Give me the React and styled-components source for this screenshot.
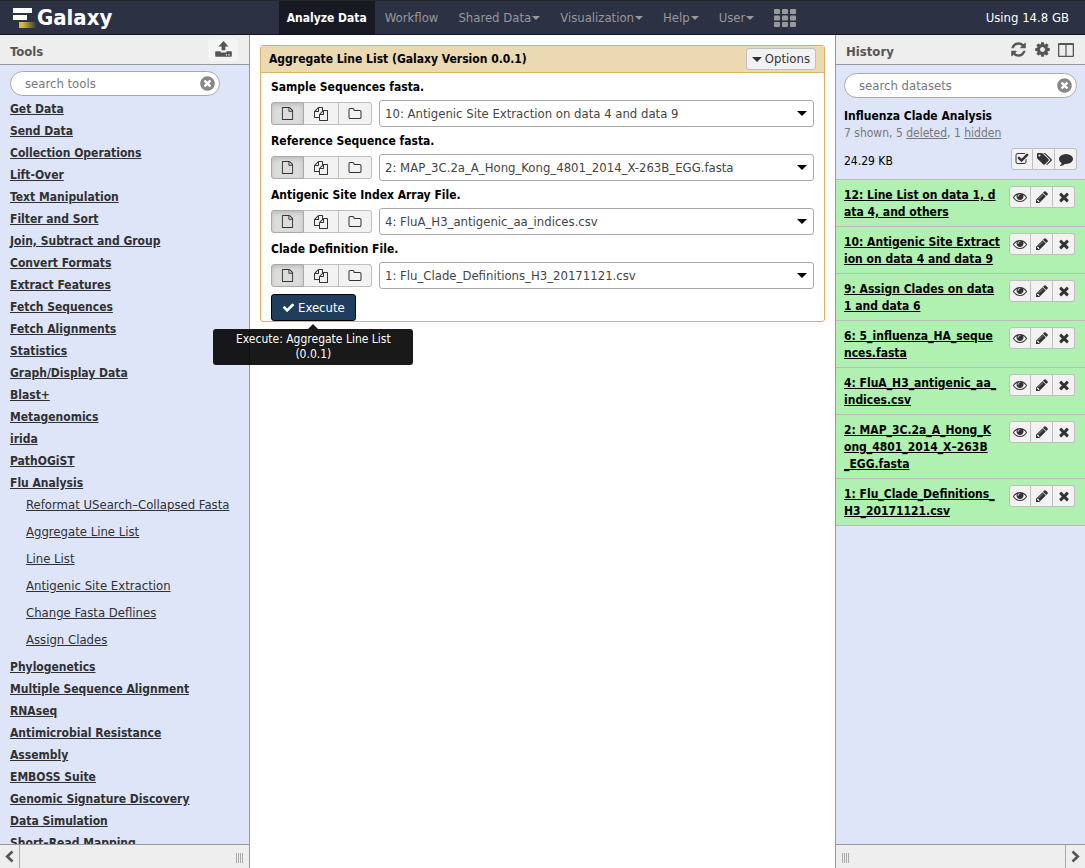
import React from "react";
import styled, { createGlobalStyle, css } from "styled-components";

const GlobalStyle = createGlobalStyle`
  *, *::before, *::after { box-sizing: border-box; }
  body {
    margin: 0;
    background: #fff;
    color: #000;
    font: 13px/18px "DejaVu Sans Condensed", "Lucida Grande", "Noto Sans", sans-serif;
  }
  button, input, select { font: inherit; margin: 0; }
  ul { list-style: none; margin: 0; padding: 0; }
`;

/* ---------- icons ---------- */

const ICONS = {
  file: "M1596 380q28 28 48 76t20 88v1152q0 40-28 68t-68 28h-1344q-40 0-68-28t-28-68v-1600q0-40 28-68t68-28h896q40 0 88 20t76 48zm-444-244v376h376q-10-29-22-41l-313-313q-12-12-41-22zm384 1528v-1024h-416q-40 0-68-28t-28-68v-416h-768v1536h1280z",
  files: "M1696 384q40 0 68 28t28 68v1216q0 40-28 68t-68 28h-960q-40 0-68-28t-28-68v-288h-544q-40 0-68-28t-28-68v-672q0-40 20-88t48-76l408-408q28-28 76-48t88-20h416q40 0 68 28t28 68v328q68-40 128-40h416zm-544 213l-299 299h299v-299zm-640-384l-299 299h299v-299zm196 647l316-316v-416h-384v416q0 40-28 68t-68 28h-416v640h512v-256q0-40 20-88t48-76zm956 804v-1152h-384v416q0 40-28 68t-68 28h-416v640h896z",
  folder: "M1600 1312v-704q0-40-28-68t-68-28h-704q-40 0-68-28t-28-68v-64q0-40-28-68t-68-28h-320q-40 0-68 28t-28 68v960q0 40 28 68t68 28h1216q40 0 68-28t28-68zm128-704v704q0 92-66 158t-158 66h-1216q-92 0-158-66t-66-158v-960q0-92 66-158t158-66h320q92 0 158 66t66 158v32h672q92 0 158 66t66 158z",
  times: "M1490 1322q0 40-28 68l-136 136q-28 28-68 28t-68-28l-294-294-294 294q-28 28-68 28t-68-28l-136-136q-28-28-28-68t28-68l294-294-294-294q-28-28-28-68t28-68l136-136q28-28 68-28t68 28l294 294 294-294q28-28 68-28t68 28l136 136q28 28 28 68t-28 68l-294 294 294 294q28 28 28 68z",
  timesCircle: "M1277 1122q0-26-19-45l-181-181 181-181q19-19 19-45 0-27-19-46l-90-90q-19-19-46-19-26 0-45 19l-181 181-181-181q-19-19-45-19-27 0-46 19l-90 90q-19 19-19 46 0 26 19 45l181 181-181 181q-19 19-19 45 0 27 19 46l90 90q19 19 46 19 26 0 45-19l181-181 181 181q19 19 45 19 27 0 46-19l90-90q19-19 19-46zm387-226q0 209-103 385.5t-279.5 279.5-385.5 103-385.5-103-279.5-279.5-103-385.5 103-385.5 279.5-279.5 385.5-103 385.5 103 279.5 279.5 103 385.5z",
  eye: "M1664 960q-152-236-381-353 61 104 61 225 0 185-131.5 316.5t-316.5 131.5-316.5-131.5-131.5-316.5q0-121 61-225-229 117-381 353 133 205 333.5 326.5t434.5 121.5 434.5-121.5 333.5-326.5zm-720-384q0-20-14-34t-34-14q-125 0-214.5 89.5t-89.5 214.5q0 20 14 34t34 14 34-14 14-34q0-86 61-147t147-61q20 0 34-14t14-34zm848 384q0 34-20 69-140 230-376.5 368.5t-499.5 138.5-499.5-139-376.5-368q-20-35-20-69t20-69q140-229 376.5-368t499.5-139 499.5 139 376.5 368q20 35 20 69z",
  pencil: "M491 1536l91-91-235-235-91 91v107h128v128h107zm523-928q0-22-22-22-10 0-17 7l-542 542q-7 7-7 17 0 22 22 22 10 0 17-7l542-542q7-7 7-17zm-54-192l416 416-832 832h-416v-416zm683 96q0 53-37 90l-166 166-416-416 166-165q36-38 90-38 53 0 91 38l235 234q37 39 37 91z",
  check: "M1671 566q0 40-28 68l-724 724-136 136q-28 28-68 28t-68-28l-136-136-362-362q-28-28-28-68t28-68l136-136q28-28 68-28t68 28l294 295 656-657q28-28 68-28t68 28l136 136q28 28 28 68z",
  checkSquare: "M1472 930v318q0 119-84.5 203.5t-203.5 84.5h-832q-119 0-203.5-84.5t-84.5-203.5v-832q0-119 84.5-203.5t203.5-84.5h832q63 0 117 25 15 7 18 23 3 17-9 29l-49 49q-10 10-23 10-3 0-9-2-23-6-45-6h-832q-66 0-113 47t-47 113v832q0 66 47 113t113 47h832q66 0 113-47t47-113v-254q0-13 9-22l64-64q10-10 23-10 6 0 12 3 20 8 20 29zm231-489l-814 814q-24 24-57 24t-57-24l-430-430q-24-24-24-57t24-57l110-110q24-24 57-24t57 24l263 263 647-647q24-24 57-24t57 24l110 110q24 24 24 57t-24 57z",
  tags: "M576 448q0-53-37.5-90.5t-90.5-37.5-90.5 37.5-37.5 90.5 37.5 90.5 90.5 37.5 90.5-37.5 37.5-90.5zm1067 576q0 53-37 90l-491 492q-39 37-91 37-53 0-90-37l-715-716q-38-37-64.5-101t-26.5-117v-416q0-52 38-90t90-38h416q53 0 117 26.5t102 64.5l715 714q37 39 37 91zm384 0q0 53-37 90l-491 492q-39 37-91 37-36 0-59-14t-53-45l470-470q37-37 37-90 0-52-37-91l-715-714q-38-38-102-64.5t-117-26.5h224q53 0 117 26.5t102 64.5l715 714q37 39 37 91z",
  comment: "M1792 896q0 174-120 321.5t-326 233-450 85.5q-70 0-145-8-198 175-460 242-49 14-114 22-17 2-30.5-9t-17.5-29v-1q-3-4-.5-12t2-10 4.5-9.5l6-9 7-8.5 8-9q7-8 31-34.5t34.5-38 31-39.5 32.5-51 27-59 26-76q-157-89-247.5-220t-90.5-281q0-130 71-248.5t191-204.5 286-136.5 348-50.5q244 0 450 85.5t326 233 120 321.5z",
  refresh: "M1639 1056q0 5-1 7-64 268-268 434.5t-478 166.5q-146 0-282.5-55t-243.5-157l-129 129q-19 19-45 19t-45-19-19-45v-448q0-26 19-45t45-19h448q26 0 45 19t19 45-19 45l-137 137q71 66 161 102t187 36q134 0 250-65t186-179q11-17 53-117 8-23 30-23h192q13 0 22.5 9.5t9.5 22.5zm25-800v448q0 26-19 45t-45 19h-448q-26 0-45-19t-19-45 19-45l138-138q-148-137-349-137-134 0-250 65t-186 179q-11 17-53 117-8 23-30 23h-199q-13 0-22.5-9.5t-9.5-22.5v-7q65-268 270-434.5t480-166.5q146 0 284 55.5t245 156.5l130-129q19-19 45-19t45 19 19 45z",
  cog: "M1152 896q0-106-75-181t-181-75-181 75-75 181 75 181 181 75 181-75 75-181zm512-109v222q0 12-8 23t-20 13l-185 28q-19 54-39 91 35 50 107 138 10 12 10 25t-9 23q-27 37-99 108t-94 71q-12 0-26-9l-138-108q-44 23-91 38-16 136-29 186-7 28-36 28h-222q-14 0-24.5-8.5t-11.5-21.5l-28-184q-49-16-90-37l-141 107q-10 9-25 9-14 0-25-11-126-114-165-168-7-10-7-23 0-12 8-23 15-21 51-66.5t54-70.5q-27-50-41-99l-183-27q-13-2-21-12.5t-8-23.5v-222q0-12 8-23t19-13l186-28q14-46 39-92-40-57-107-138-10-12-10-24 0-10 9-23 26-36 98.5-107.5t94.5-71.5q13 0 26 10l138 107q44-23 91-38 16-136 29-186 7-28 36-28h222q14 0 24.5 8.5t11.5 21.5l28 184q49 16 90 37l142-107q9-9 24-9 13 0 25 10 129 119 165 170 7 8 7 22 0 12-8 23-15 21-51 66.5t-54 70.5q26 50 41 98l183 28q13 2 21 12.5t8 23.5z",
};

const Glyph = styled.svg`
  display: block;
  flex: none;
  fill: currentColor;
`;

function Icon({ name, size = 14, wide = 1792 }) {
  return (
    <Glyph width={Math.round((size * wide) / 1792)} height={size} viewBox={`0 0 ${wide} 1792`} aria-hidden="true">
      <path d={ICONS[name]} />
    </Glyph>
  );
}

const UploadIcon = () => (
  <Glyph width="17" height="17" viewBox="0 0 17 17" aria-hidden="true">
    <path d="M8.500 0L13.500 5.600H10.400V9.300H6.600V5.600H3.500Z" />
    <path fillRule="evenodd" d="M1 10.200H5.600V11.500H11.400V10.200H16Q16.800 10.200 16.800 11V15Q16.800 15.800 16 15.800H1Q.2 15.800 .2 15V11Q.2 10.200 1 10.200ZM10.800 13.200V14.400H12V13.200ZM13.200 13.200V14.400H14.600V13.200Z" />
  </Glyph>
);

const ColumnsIcon = () => (
  <Glyph width="16" height="16" viewBox="0 0 16 16" aria-hidden="true">
    <path fillRule="evenodd" d="M1 1H15Q16 1 16 2V14Q16 15 15 15H1Q0 15 0 14V2Q0 1 1 1ZM1.300 3V13.700H7.400V3ZM8.600 3V13.700H14.700V3Z" />
  </Glyph>
);

const ChevronIcon = ({ right }) => (
  <Glyph width="9" height="13" viewBox="0 0 9 13" aria-hidden="true">
    <path
      d={right ? "M1.500 1.500L6.800 6.500L1.500 11.500" : "M7.500 1.500L2.200 6.500L7.500 11.500"}
      fill="none"
      stroke="currentColor"
      strokeWidth="2.600"
    />
  </Glyph>
);

const GridIcon = () => (
  <Glyph width="22" height="18" viewBox="0 0 22 18" aria-hidden="true">
    {[0, 1, 2].map((r) =>
      [0, 1, 2].map((c) => <rect key={`${r}${c}`} x={c * 8} y={r * 6.500} width="6" height="5" rx="1" />)
    )}
  </Glyph>
);

const LogoMark = () => (
  <Glyph width="25" height="22" viewBox="0 0 25 22" aria-hidden="true">
    <defs>
      <linearGradient id="gold">
        <stop offset="0.2" stopColor="#d6bb35" />
        <stop offset="1" stopColor="#d6bb35" stopOpacity="0" />
      </linearGradient>
    </defs>
    <rect x="1" y="1" width="19" height="5" fill="#fff" />
    <rect x="1" y="8" width="14" height="5" fill="#fff" />
    <rect x="7" y="15" width="18" height="6" fill="url(#gold)" />
  </Glyph>
);

const Caret = styled.span`
  display: block;
  flex: none;
  border: 4px solid transparent;
  border-top-color: currentColor;
  border-bottom: 0;
`;

/* ---------- page frame ---------- */

const Page = styled.div`
  display: flex;
  flex-direction: column;
  height: 100vh;
`;

const Masthead = styled.header`
  display: grid;
  grid-template-columns: 1fr auto 1fr;
  align-items: stretch;
  flex: none;
  height: 35px;
  border-top: 1px solid #262626;
  border-bottom: 1px solid #14161f;
  background: #2c3143;
`;

const Brand = styled.a`
  display: flex;
  align-items: center;
  padding-left: 12px;
  color: #fff;
  font-size: 22px;
  font-weight: bold;
  text-decoration: none;
`;

const Nav = styled.nav`
  display: flex;
`;

const NavLink = styled.a`
  display: flex;
  align-items: center;
  gap: 1px;
  padding: ${(p) => (p.$active ? "0 8px" : "0 10px")};
  color: ${(p) => (p.$active ? "#fff" : "#999")};
  background: ${(p) => (p.$active ? "#181a23" : "none")};
  font-size: ${(p) => (p.$active ? "12px" : "13px")};
  font-weight: ${(p) => (p.$active ? "bold" : "normal")};
  text-decoration: none;
`;

const Quota = styled.div`
  align-self: center;
  justify-self: end;
  padding-right: 16px;
  color: #fff;
  font-size: 13px;
`;

const Columns = styled.div`
  display: flex;
  flex: 1;
  min-height: 0;
`;

const Panel = styled.aside`
  display: flex;
  flex-direction: column;
  flex: none;
  width: 250px;
  background: #dfe5f9;
  border: 0 solid #999;
  border-width: ${(p) => (p.$side === "left" ? "0 1px 0 0" : "0 0 0 1px")};
`;

const PanelHeader = styled.div`
  display: flex;
  align-items: center;
  justify-content: space-between;
  flex: none;
  height: 30px;
  padding: 0 11px 0 10px;
  border-bottom: 1px solid #999;
  background: #eee;
  color: #555;
`;

const PanelTitle = styled.h2`
  margin: 0;
  padding-top: 4px;
  font-size: 13px;
  font-weight: bold;
`;

const HeaderTools = styled.div`
  display: flex;
  align-items: center;
  gap: 7px;
`;

const BareButton = styled.button`
  display: flex;
  align-items: center;
  justify-content: center;
  padding: 0;
  border: 0;
  background: none;
  color: inherit;
`;

const UploadButton = styled(BareButton)`
  width: 30px;
  height: 22px;
  border-radius: 3px;
  background: #f4f4f4;
`;

const PanelBody = styled.div`
  flex: 1;
  min-height: 0;
  overflow: hidden;
`;

const PanelFooter = styled.div`
  display: flex;
  align-items: stretch;
  justify-content: space-between;
  flex-direction: ${(p) => (p.$side === "left" ? "row" : "row-reverse")};
  flex: none;
  height: 24px;
  border-top: 1px solid #999;
  background: #eee;
  color: #555;
`;

const Collapse = styled(BareButton)`
  width: 20px;
  border: 0 solid #aaa;
  border-width: ${(p) => (p.$side === "left" ? "0 1px 0 0" : "0 0 0 1px")};
`;

const Grip = styled.div`
  align-self: center;
  width: 7px;
  height: 10px;
  margin: 3px 6px 0;
  background: repeating-linear-gradient(to right, #aaa 0 1px, transparent 1px 2px);
`;

/* ---------- search ---------- */

const SearchBox = styled.form`
  display: flex;
  align-items: center;
  height: 25px;
  padding: 0 3px 0 14px;
  border: 1px solid #aaa;
  border-radius: 13px;
  background: #fff;
  color: #888;
`;

const SearchInput = styled.input`
  flex: 1;
  min-width: 0;
  padding: 0;
  border: 0;
  outline: 0;
  background: none;
  font-size: 13px;
  line-height: 18px;
  &::placeholder { color: #777; opacity: 1; }
`;

function Search({ label }) {
  return (
    <SearchBox onSubmit={(e) => e.preventDefault()}>
      <SearchInput placeholder={label} aria-label={label} />
      <BareButton type="button" aria-label="Clear search">
        <Icon name="timesCircle" size={17} />
      </BareButton>
    </SearchBox>
  );
}

/* ---------- tool list ---------- */

const ToolSearch = styled.div`
  padding: 6px 29px 2px 10px;
`;

const ToolLink = styled.a`
  display: block;
  padding-left: 10px;
  color: #303030;
  white-space: nowrap;
  ${(p) =>
    p.$tool
      ? css`
          padding-left: 26px;
          padding-bottom: 6px;
          font-size: 13px;
          line-height: 21px;
        `
      : css`
          font-size: 12px;
          font-weight: bold;
          line-height: 22px;
        `}
`;

const SECTIONS = [
  "Get Data", "Send Data", "Collection Operations", "Lift-Over", "Text Manipulation", "Filter and Sort",
  "Join, Subtract and Group", "Convert Formats", "Extract Features", "Fetch Sequences", "Fetch Alignments",
  "Statistics", "Graph/Display Data", "Blast+", "Metagenomics", "irida", "PathOGiST", "Flu Analysis",
  "Phylogenetics", "Multiple Sequence Alignment", "RNAseq", "Antimicrobial Resistance", "Assembly",
  "EMBOSS Suite", "Genomic Signature Discovery", "Data Simulation", "Short–Read Mapping",
];

const FLU_TOOLS = [
  "Reformat USearch–Collapsed Fasta", "Aggregate Line List", "Line List",
  "Antigenic Site Extraction", "Change Fasta Deflines", "Assign Clades",
];

/* ---------- tool form ---------- */

const Main = styled.main`
  flex: 1;
  min-width: 0;
  padding: 10px;
`;

const Card = styled.form`
  border: 1px solid #d8b365;
  border-radius: 3px;
`;

const CardHeader = styled.div`
  display: flex;
  align-items: center;
  justify-content: space-between;
  height: 27px;
  padding: 0 8px;
  border-bottom: 1px solid #d8b365;
  background: #ebd9b2;
`;

const CardTitle = styled.h1`
  margin: 0;
  font-size: 12px;
  font-weight: bold;
`;

const OptionsButton = styled.button`
  display: flex;
  align-items: center;
  gap: 3px;
  height: 22px;
  padding: 0 5px;
  border: 1px solid #bfbfbf;
  border-radius: 3px;
  background: #f2f2f2;
  color: #333;
`;

const CardBody = styled.div`
  padding: 3px 10px 0;
`;

const Field = styled.div`
  padding-bottom: 3px;
`;

const FieldLabel = styled.label`
  display: block;
  padding-bottom: 2px;
  font-size: 12px;
  font-weight: bold;
  line-height: 22px;
`;

const FieldRow = styled.div`
  display: flex;
  align-items: center;
  gap: 7px;
`;

const ButtonGroup = styled.div`
  display: flex;
  flex: none;
`;

const GroupButton = styled.button`
  display: flex;
  align-items: center;
  justify-content: center;
  width: ${(p) => p.$width}px;
  height: ${(p) => p.$height}px;
  padding: 0;
  border: 1px solid #bfbfbf;
  background: #f2f2f2;
  color: #333;
  & + & { border-left: 0; }
  &:first-child { border-radius: 3px 0 0 3px; }
  &:last-child { border-radius: 0 3px 3px 0; }
  ${(p) =>
    p.$pressed &&
    css`
      border-color: #aaa;
      background: #dcdcdc;
      box-shadow: inset 0 2px 4px rgba(0, 0, 0, 0.15);
    `}
`;

const SelectWrap = styled.div`
  display: flex;
  align-items: center;
  flex: 1;
  min-width: 0;
  height: 27px;
  padding-right: 6px;
  border: 1px solid #aaa;
  border-radius: 3px;
`;

const Select = styled.select`
  flex: 1;
  min-width: 0;
  height: 25px;
  padding: 0 5px;
  border: 0;
  background: none;
  color: #444;
  appearance: none;
`;

const BigCaret = styled(Caret)`
  border-width: 5px 5px 0;
`;

const Submit = styled.div`
  position: relative;
  width: max-content;
  padding-top: 2px;
`;

const ExecuteButton = styled.button`
  display: flex;
  align-items: center;
  gap: 3px;
  height: 27px;
  padding: 0 10px;
  border: 1px solid #000;
  border-radius: 3px;
  background: #1f3d5c;
  color: #fff;
`;

const Tooltip = styled.div`
  position: absolute;
  z-index: 10;
  top: 100%;
  left: 50%;
  width: 200px;
  margin-top: 8px;
  padding: 3px 8px;
  border-radius: 3px;
  transform: translateX(-50%);
  background: rgba(0, 0, 0, 0.9);
  color: #fff;
  font-size: 12px;
  line-height: 15px;
  text-align: center;
  &::before {
    content: "";
    position: absolute;
    bottom: 100%;
    left: 50%;
    margin-left: -5px;
    border: 5px solid transparent;
    border-top: 0;
    border-bottom-color: rgba(0, 0, 0, 0.9);
  }
`;

const FIELDS = [
  ["Sample Sequences fasta.", "10: Antigenic Site Extraction on data 4 and data 9"],
  ["Reference Sequence fasta.", "2: MAP_3C.2a_A_Hong_Kong_4801_2014_X-263B_EGG.fasta"],
  ["Antigenic Site Index Array File.", "4: FluA_H3_antigenic_aa_indices.csv"],
  ["Clade Definition File.", "1: Flu_Clade_Definitions_H3_20171121.csv"],
];

/* ---------- history ---------- */

const HistoryHead = styled.div`
  padding: 8px 8px 9px;
  border-bottom: 1px solid #bbb;
`;

const HistoryName = styled.h3`
  margin: 9px 0 0;
  font-size: 12px;
  font-weight: bold;
  line-height: 18px;
`;

const HistoryCounts = styled.div`
  color: #777;
  font-size: 12px;
  line-height: 16px;
  a { color: inherit; }
`;

const HistoryStats = styled.div`
  display: flex;
  align-items: flex-end;
  justify-content: space-between;
  padding-top: 7px;
`;

const Size = styled.span`
  font-size: 12px;
  line-height: 18px;
`;

const Dataset = styled.li`
  display: flex;
  align-items: flex-start;
  justify-content: space-between;
  padding: 6px 10px 5px 8px;
  border-bottom: 1px solid #bbb;
  background: #b0f0b0;
`;

const DatasetName = styled.a`
  padding-top: 1px;
  color: #000;
  font-size: 12px;
  font-weight: bold;
  line-height: 17px;
  white-space: pre;
`;

const DATASETS = [
  "12: Line List on data 1, d\nata 4, and others",
  "10: Antigenic Site Extract\nion on data 4 and data 9",
  "9: Assign Clades on data\n1 and data 6",
  "6: 5_influenza_HA_seque\nnces.fasta",
  "4: FluA_H3_antigenic_aa_\nindices.csv",
  "2: MAP_3C.2a_A_Hong_K\nong_4801_2014_X–263B\n_EGG.fasta",
  "1: Flu_Clade_Definitions_\nH3_20171121.csv",
];

export default function App() {
  return (
    <Page>
      <GlobalStyle />
      <Masthead>
        <Brand href="#"><LogoMark />Galaxy</Brand>
        <Nav>
          <NavLink href="#" $active>Analyze Data</NavLink>
          <NavLink href="#">Workflow</NavLink>
          <NavLink href="#">Shared Data<Caret /></NavLink>
          <NavLink href="#">Visualization<Caret /></NavLink>
          <NavLink href="#">Help<Caret /></NavLink>
          <NavLink href="#">User<Caret /></NavLink>
          <NavLink href="#" aria-label="Apps"><GridIcon /></NavLink>
        </Nav>
        <Quota>Using 14.8 GB</Quota>
      </Masthead>

      <Columns>
        <Panel $side="left">
          <PanelHeader>
            <PanelTitle>Tools</PanelTitle>
            <UploadButton aria-label="Upload data"><UploadIcon /></UploadButton>
          </PanelHeader>
          <PanelBody>
            <ToolSearch><Search label="search tools" /></ToolSearch>
            <ul>
              {SECTIONS.map((name) => (
                <li key={name}>
                  <ToolLink href="#">{name}</ToolLink>
                  {name === "Flu Analysis" && (
                    <ul>
                      {FLU_TOOLS.map((tool) => (
                        <li key={tool}><ToolLink href="#" $tool>{tool}</ToolLink></li>
                      ))}
                    </ul>
                  )}
                </li>
              ))}
            </ul>
          </PanelBody>
          <PanelFooter $side="left">
            <Collapse $side="left" aria-label="Collapse tools"><ChevronIcon /></Collapse>
            <Grip />
          </PanelFooter>
        </Panel>

        <Main>
          <Card onSubmit={(e) => e.preventDefault()}>
            <CardHeader>
              <CardTitle>Aggregate Line List (Galaxy Version 0.0.1)</CardTitle>
              <OptionsButton type="button"><BigCaret />Options</OptionsButton>
            </CardHeader>
            <CardBody>
              {FIELDS.map(([label, value], i) => (
                <Field key={label}>
                  <FieldLabel htmlFor={`input-${i}`}>{label}</FieldLabel>
                  <FieldRow>
                    <ButtonGroup>
                      <GroupButton type="button" $width={33} $height={23} $pressed aria-label="Single dataset"><Icon name="file" size={13} /></GroupButton>
                      <GroupButton type="button" $width={35} $height={23} aria-label="Multiple datasets"><Icon name="files" size={14} /></GroupButton>
                      <GroupButton type="button" $width={33} $height={23} aria-label="Dataset collection"><Icon name="folder" size={14} /></GroupButton>
                    </ButtonGroup>
                    <SelectWrap>
                      <Select id={`input-${i}`}><option>{value}</option></Select>
                      <BigCaret />
                    </SelectWrap>
                  </FieldRow>
                </Field>
              ))}
              <Submit>
                <ExecuteButton type="submit"><Icon name="check" size={13} />Execute</ExecuteButton>
                <Tooltip role="tooltip">Execute: Aggregate Line List (0.0.1)</Tooltip>
              </Submit>
            </CardBody>
          </Card>
        </Main>

        <Panel $side="right">
          <PanelHeader>
            <PanelTitle>History</PanelTitle>
            <HeaderTools>
              <BareButton aria-label="Refresh history"><Icon name="refresh" size={17} /></BareButton>
              <BareButton aria-label="History options"><Icon name="cog" size={17} /></BareButton>
              <BareButton aria-label="View all histories"><ColumnsIcon /></BareButton>
            </HeaderTools>
          </PanelHeader>
          <PanelBody>
            <HistoryHead>
              <Search label="search datasets" />
              <HistoryName>Influenza Clade Analysis</HistoryName>
              <HistoryCounts>7 shown, 5 <a href="#">deleted</a>, 1 <a href="#">hidden</a></HistoryCounts>
              <HistoryStats>
                <Size>24.29 KB</Size>
                <ButtonGroup>
                  <GroupButton $width={22} $height={22} aria-label="Select datasets"><Icon name="checkSquare" size={14} /></GroupButton>
                  <GroupButton $width={22} $height={22} aria-label="Edit tags"><Icon name="tags" size={14} wide={2048} /></GroupButton>
                  <GroupButton $width={22} $height={22} aria-label="Edit annotation"><Icon name="comment" size={14} /></GroupButton>
                </ButtonGroup>
              </HistoryStats>
            </HistoryHead>
            <ul>
              {DATASETS.map((name) => (
                <Dataset key={name}>
                  <DatasetName href="#">{name}</DatasetName>
                  <ButtonGroup>
                    <GroupButton $width={22} $height={22} aria-label="View data"><Icon name="eye" size={14} /></GroupButton>
                    <GroupButton $width={22} $height={22} aria-label="Edit attributes"><Icon name="pencil" size={14} /></GroupButton>
                    <GroupButton $width={22} $height={22} aria-label="Delete"><Icon name="times" size={14} /></GroupButton>
                  </ButtonGroup>
                </Dataset>
              ))}
            </ul>
          </PanelBody>
          <PanelFooter $side="right">
            <Collapse $side="right" aria-label="Collapse history"><ChevronIcon right /></Collapse>
            <Grip />
          </PanelFooter>
        </Panel>
      </Columns>
    </Page>
  );
}
